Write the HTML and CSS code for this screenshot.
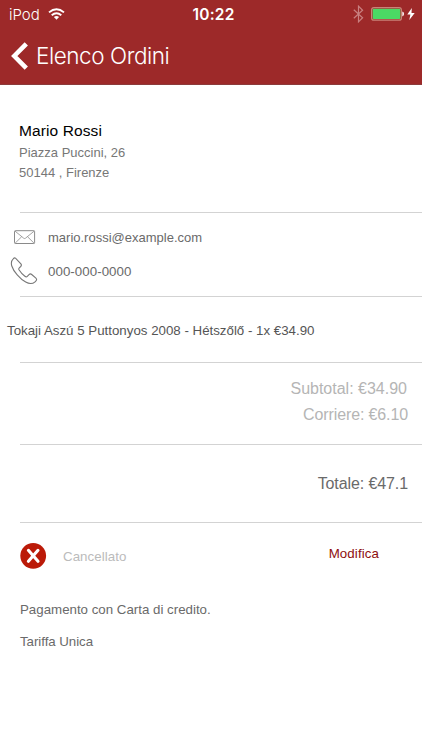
FILE: index.html
```html
<!DOCTYPE html>
<html lang="it">
<head>
<meta charset="utf-8">
<title>Elenco Ordini</title>
<link rel="stylesheet" href="styles.css">
</head>
<body>
<header class="header">
  <div class="status">
    <div class="carrier"><span class="device">iPod</span>
      <svg class="wifi" width="17" height="12" viewBox="0 0 17 12"><g fill="none" stroke="#fff" stroke-width="1.9"><path d="M1 4.4Q8.5-2 16 4.4"/><path d="M3.7 7.3Q8.5 3.2 13.3 7.3"/></g><path fill="#fff" d="M5.9 9.1Q8.5 7 11.1 9.1L8.5 11.7Z"/></svg>
    </div>
    <span class="time">10:22</span>
    <div class="indicators">
      <svg width="11" height="18" viewBox="0 0 11 18"><path d="M.8 4.7 9.6 12.7 5.5 16.8V1.2L9.6 5.3.8 13.3" fill="none" stroke="#c98080" stroke-width="1.2"/></svg>
      <svg class="battery" width="34" height="14" viewBox="0 0 34 14"><rect x=".6" y=".6" width="29.8" height="12.6" rx="2.3" fill="none" stroke="#c98378" stroke-width="1.2"/><rect x="1.7" y="1.7" width="27.6" height="10.4" rx="1" fill="#4bd964"/><path d="M31.3 4.5Q33 5 33 6.9T31.3 9.4Z" fill="#fff"/></svg>
      <svg class="bolt" width="8" height="12" viewBox="0 0 8 12"><path fill="#fff" d="M4.8 0 .3 6.5H3.4L2.3 12 7.7 4.9H4.5Z"/></svg>
    </div>
  </div>
  <nav class="nav">
    <svg width="18" height="28" viewBox="0 0 18 28"><path d="M15.3 1.9 3.3 14 15.3 26.1" fill="none" stroke="#fff" stroke-width="4.6"/></svg>
    <h1 class="title"><span>Elenco Ordini</span></h1>
  </nav>
</header>
<main>
  <section class="block customer">
    <h2 class="name"><span>Mario Rossi</span></h2>
    <p class="street"><span>Piazza Puccini, 26</span></p>
    <p class="city"><span>50144 , Firenze</span></p>
  </section>
  <section class="block contacts">
    <div class="contact mail">
      <svg width="22" height="15" viewBox="0 0 22 15"><g fill="none" stroke="#8a8a8a"><rect x=".5" y=".7" width="20.1" height="12.8" rx=".8"/><path d="M1 1.1 9.7 8.2Q10.6 8.9 11.5 8.2L20.2 1.1M1 13.3 7.7 6.7M20.2 13.3 13.5 6.7" stroke-width=".8"/></g></svg>
      <span class="email">mario.rossi@example.com</span>
    </div>
    <div class="contact">
      <svg width="28" height="28" viewBox="0 0 28 28"><path d="M5.5 1.1C4.7.6 4 .9 3.2 1.8 1.3 3.7.9 6 1.8 9c1.7 5.5 8.1 13 13.9 16.1 3.3 1.8 6.7 2 9.4-.3 1.6-1.4 2-2.5.8-3.7l-4.2-3.6c-.9-.8-1.8-.8-2.7.1l-1.7 1.8c-.7.7-1.5.6-2.4-.1-2.3-1.7-4.4-4.1-5.9-6.5-.4-.8-.3-1.4.3-2l1.4-1.3c.9-.9.9-1.7.2-2.6Z" fill="#fff" stroke="#777" stroke-width="1.1"/></svg>
      <span class="phone">000-000-0000</span>
    </div>
  </section>
  <section class="block item"><span class="product">Tokaji Aszú 5 Puttonyos 2008 - Hétszőlő - 1x €34.90</span></section>
  <section class="block costs">
    <p class="subtotal"><span>Subtotal: €34.90</span></p>
    <p class="shipping"><span>Corriere: €6.10</span></p>
  </section>
  <section class="block total"><span class="sum">Totale: €47.1</span></section>
  <section class="state">
    <svg width="28" height="28" viewBox="0 0 28 28"><circle cx="14.2" cy="13.8" r="12.9" fill="#bb1a08"/><path d="M9.4 8.3 19 19.3M19 8.3 9.4 19.3" stroke="#fff" stroke-width="3.1" stroke-linecap="round"/></svg>
    <span class="cancelled">Cancellato</span>
    <a class="edit">Modifica</a>
  </section>
  <section class="payment">
    <p class="method"><span>Pagamento con Carta di credito.</span></p>
    <p class="rate"><span>Tariffa Unica</span></p>
  </section>
</main>
</body>
</html>
```
FILE: styles.css
```css
* { box-sizing: border-box; }
body { margin: 0; width: 422px; height: 750px; overflow: hidden; background: #fff; color: #6a6a6a; font: 13.3px/20px "Liberation Sans", Arial, sans-serif; }
h1, h2, p { margin: 0; font-weight: 400; }
svg { display: block; flex: none; }
.header { height: 85px; background: #9d2929; border-bottom: 1px solid #8c3b3b; color: #fff; font-family: Inter, sans-serif; }
.status { display: grid; grid-template-columns: 1fr auto 1fr; align-items: center; height: 28px; padding: 0 7px 0 9px; }
.carrier { display: flex; align-items: center; gap: 8px; font-size: 15px; }
.device { padding-top: 1px; font-weight: 300; }
.time { padding: 1px 0 0 3px; font-size: 15.5px; font-weight: 600; letter-spacing: .2px; }
.indicators { display: flex; align-items: center; justify-content: flex-end; }
.battery { margin-left: 7px; }
.bolt { margin-left: 2px; }
.nav { display: flex; align-items: center; height: 56px; padding-left: 11px; }
.title { margin-left: 7px; font-size: 22.5px; font-weight: 300; line-height: 28px; letter-spacing: -.45px; }
.block { margin-left: 20px; border-bottom: 1px solid #d3d3d3; }
.customer { height: 128px; padding-top: 36px; }
.customer > * { margin-left: -1px; }
.name { color: #000; font-size: 15.5px; line-height: 20px; letter-spacing: .1px; }
.street, .city { color: #777; font-size: 13px; }
.street { margin-top: 2px; }
.contacts { height: 84px; padding-top: 7px; }
.contact { display: flex; align-items: center; height: 34px; margin-left: -10px; gap: 10px; }
.contact span { padding-top: 2px; }
.mail { margin-left: -6px; gap: 12px; }
.email { font-size: 13px; }
.phone { letter-spacing: .05px; }
.item { height: 66px; padding-top: 24px; color: #555; }
.product { margin-left: -13px; }
.costs { height: 82px; padding: 13px 14px 0 0; text-align: right; font-size: 16px; line-height: 26px; color: #b5b5b5; }
.subtotal { padding-right: 1px; }
.shipping { letter-spacing: -.12px; }
.total { height: 78px; padding: 26px 14px 0 0; text-align: right; font-size: 16px; line-height: 26px; letter-spacing: -.1px; }
.state { display: flex; height: 62px; padding: 19px 43px 0 19px; }
.cancelled { margin: 5px 0 0 16px; color: #bbb; letter-spacing: .05px; }
.edit { margin: 2px 0 0 auto; color: #8e0e0e; letter-spacing: .1px; }
.payment { padding: 15px 0 0 20px; }
.rate { margin-top: 12px; letter-spacing: -.05px; }
```
